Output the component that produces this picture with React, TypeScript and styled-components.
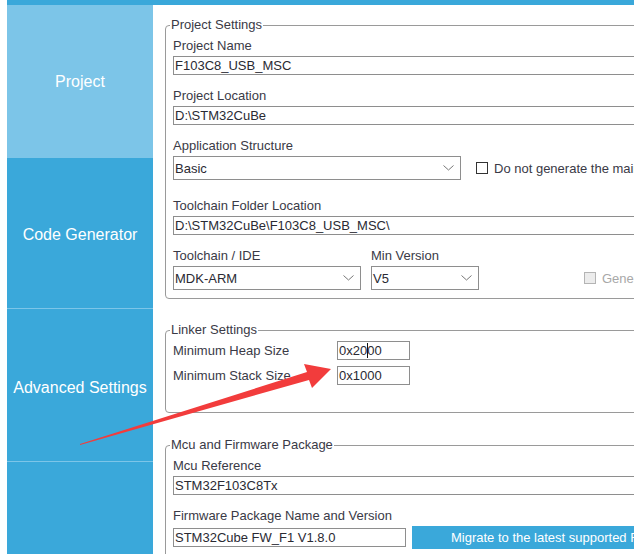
import React from "react";
import styled, { createGlobalStyle } from "styled-components";

const Global = createGlobalStyle`
  html, body { margin: 0; padding: 0; background: #ffffff; }
  * { box-sizing: border-box; }
`;

const BLUE = "#3aa8da";
const LIGHT = "#7cc5e8";
const TEXT = "#3a3a46";

const Root = styled.div`
  position: relative;
  width: 634px;
  height: 554px;
  overflow: hidden;
  background: #fff;
  padding-left: 7px;
  display: flex;
  flex-direction: column;
  font-family: "Liberation Sans", Arial, sans-serif;
  font-size: 13px;
  color: ${TEXT};
`;

const TopBar = styled.div`
  height: 5px;
  flex: none;
  background: ${BLUE};
`;

const Body = styled.div`
  flex: 1;
  display: flex;
  min-height: 0;
`;

const Sidebar = styled.nav`
  width: 146px;
  flex: none;
  display: flex;
  flex-direction: column;
  background: ${BLUE};
`;

const NavItem = styled.div<{ $active?: boolean; $h: number; $sep?: boolean; $shift?: number }>`
  height: ${(p) => p.$h}px;
  flex: none;
  display: flex;
  align-items: center;
  justify-content: center;
  padding-top: ${(p) => p.$shift ?? 0}px;
  background: ${(p) => (p.$active ? LIGHT : BLUE)};
  border-top: ${(p) => (p.$sep ? `1px solid ${LIGHT}` : "none")};
  color: #ffffff;
  font-size: 16px;
  line-height: 18px;
`;

const Content = styled.main`
  flex: 1;
  min-width: 0;
  overflow: hidden;
  padding: 12px 0 0 12px;
`;

const Inner = styled.div`
  width: 640px;
  display: flex;
  flex-direction: column;
`;

const Group = styled.fieldset<{ $pt: number; $pb: number; $mt?: number }>`
  margin: ${(p) => p.$mt ?? 0}px 0 0 0;
  min-width: 0;
  border: 1px solid #9a9a9a;
  border-radius: 4px;
  padding: ${(p) => p.$pt}px 0 ${(p) => p.$pb}px 7px;
  display: flex;
  flex-direction: column;
`;

const Legend = styled.legend`
  margin-left: -3px;
  padding: 0 1px;
  font-size: 13px;
  line-height: 16px;
  color: ${TEXT};
`;

const Field = styled.div<{ $mt?: number }>`
  display: flex;
  flex-direction: column;
  gap: 2px;
  margin-top: ${(p) => p.$mt ?? 0}px;
`;

const Label = styled.div`
  line-height: 16px;
  height: 16px;
  white-space: nowrap;
  color: ${TEXT};
`;

const TextBox = styled.div<{ $w?: number }>`
  width: ${(p) => (p.$w ? `${p.$w}px` : "auto")};
  height: 19px;
  flex: none;
  border: 1px solid #8e8e8e;
  background: #fff;
  padding: 0 0 0 1px;
  line-height: 17px;
  color: #2a2a33;
  white-space: nowrap;
  overflow: hidden;
`;

const Caret = styled.span`
  display: inline-block;
  width: 1px;
  height: 15px;
  margin: 0 -1px 0 0;
  vertical-align: -3px;
  background: #111;
`;

const Row = styled.div<{ $gap?: number; $mt?: number; $bottom?: boolean }>`
  display: flex;
  align-items: ${(p) => (p.$bottom ? "flex-end" : "center")};
  gap: ${(p) => p.$gap ?? 0}px;
  margin-top: ${(p) => p.$mt ?? 0}px;
`;

const Select = styled.div<{ $w: number }>`
  width: ${(p) => p.$w}px;
  height: 24px;
  flex: none;
  border: 1px solid #8e8e8e;
  background: #fff;
  display: flex;
  align-items: center;
  justify-content: space-between;
  padding: 0 6px 0 1px;
  color: #2a2a33;
`;

const Check = styled.div<{ $disabled?: boolean; $ml?: number }>`
  height: 24px;
  display: flex;
  align-items: center;
  gap: 6px;
  margin-left: ${(p) => p.$ml ?? 0}px;
  white-space: nowrap;
  color: ${(p) => (p.$disabled ? "#a8a8a8" : TEXT)};
`;

const Box = styled.span<{ $disabled?: boolean }>`
  width: 12px;
  height: 12px;
  flex: none;
  border: 1px solid ${(p) => (p.$disabled ? "#b4b4b4" : "#333")};
  background: ${(p) => (p.$disabled ? "#ececec" : "#fff")};
`;

const LinkerGrid = styled.div`
  display: grid;
  grid-template-columns: 164px 73px;
  row-gap: 6px;
  align-items: center;
`;

const MigrateButton = styled.div`
  width: 330px;
  height: 23px;
  flex: none;
  background: ${BLUE};
  color: #fff;
  line-height: 23px;
  padding-left: 39px;
  white-space: nowrap;
  overflow: hidden;
`;

const Overlay = styled.svg`
  position: absolute;
  left: 0;
  top: 0;
  pointer-events: none;
`;

const Chevron = () => (
  <svg width="11" height="6" viewBox="0 0 11 6">
    <polyline points="0.5,0.5 5.5,5 10.5,0.5" fill="none" stroke="#777" strokeWidth="1" />
  </svg>
);

export default function App() {
  return (
    <Root>
      <Global />
      <TopBar />
      <Body>
        <Sidebar>
          <NavItem $active $h={153}>Project</NavItem>
          <NavItem $h={150} $shift={3}>Code Generator</NavItem>
          <NavItem $h={153} $sep $shift={5}>Advanced Settings</NavItem>
          <NavItem $h={100} $sep />
        </Sidebar>
        <Content>
          <Inner>
            <Group $pt={5} $pb={8}>
              <Legend>Project Settings</Legend>
              <Field>
                <Label>Project Name</Label>
                <TextBox>F103C8_USB_MSC</TextBox>
              </Field>
              <Field $mt={13}>
                <Label>Project Location</Label>
                <TextBox>D:\STM32CuBe</TextBox>
              </Field>
              <Field $mt={13}>
                <Label>Application Structure</Label>
                <Row $gap={15}>
                  <Select $w={288}>
                    Basic
                    <Chevron />
                  </Select>
                  <Check>
                    <Box />
                    Do not generate the main()
                  </Check>
                </Row>
              </Field>
              <Field $mt={18}>
                <Label>Toolchain Folder Location</Label>
                <TextBox>D:\STM32CuBe\F103C8_USB_MSC\</TextBox>
              </Field>
              <Row $gap={10} $mt={13} $bottom>
                <Field>
                  <Label>Toolchain / IDE</Label>
                  <Select $w={188}>
                    MDK-ARM
                    <Chevron />
                  </Select>
                </Field>
                <Field>
                  <Label>Min Version</Label>
                  <Select $w={108}>
                    V5
                    <Chevron />
                  </Select>
                </Field>
                <Check $disabled $ml={95}>
                  <Box $disabled />
                  Generate Under Root
                </Check>
              </Row>
            </Group>

            <Group $pt={3} $pb={27} $mt={23}>
              <Legend>Linker Settings</Legend>
              <LinkerGrid>
                <Label>Minimum Heap Size</Label>
                <TextBox>
                  0x20<Caret />00
                </TextBox>
                <Label>Minimum Stack Size</Label>
                <TextBox>0x1000</TextBox>
              </LinkerGrid>
            </Group>

            <Group $pt={5} $pb={30} $mt={24}>
              <Legend>Mcu and Firmware Package</Legend>
              <Field>
                <Label>Mcu Reference</Label>
                <TextBox>STM32F103C8Tx</TextBox>
              </Field>
              <Field $mt={13}>
                <Label>Firmware Package Name and Version</Label>
                <Row $gap={6}>
                  <TextBox $w={233}>STM32Cube FW_F1 V1.8.0</TextBox>
                  <MigrateButton>Migrate to the latest supported Firmware Package</MigrateButton>
                </Row>
              </Field>
            </Group>
          </Inner>
        </Content>
      </Body>
      <Overlay width="634" height="554" viewBox="0 0 634 554">
        <polygon
          points="80,444 307,372 304,364 331,369 312,388 309,380 80,445"
          fill="#f23c3c"
        />
      </Overlay>
    </Root>
  );
}
